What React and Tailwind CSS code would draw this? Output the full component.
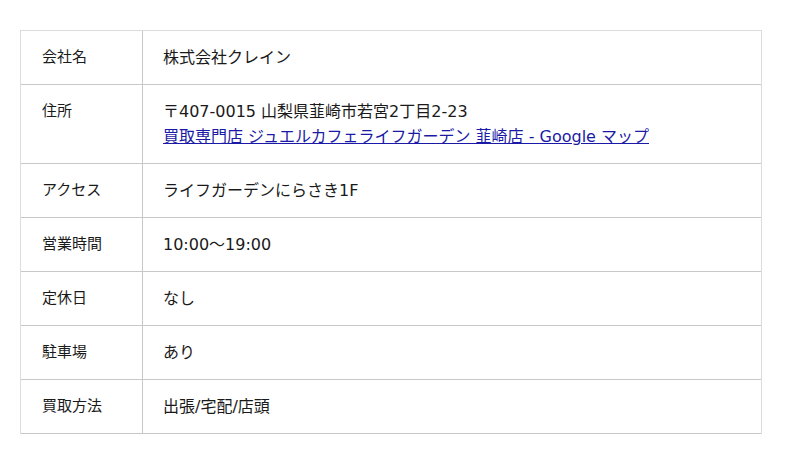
import React from 'react';

const rows = [
  { label: '会社名', value: '株式会社クレイン' },
  {
    label: '住所',
    value: '〒407-0015 山梨県韮崎市若宮2丁目2-23',
    link: '買取専門店 ジュエルカフェライフガーデン 韮崎店 - Google マップ',
  },
  { label: 'アクセス', value: 'ライフガーデンにらさき1F' },
  { label: '営業時間', value: '10:00〜19:00' },
  { label: '定休日', value: 'なし' },
  { label: '駐車場', value: 'あり' },
  { label: '買取方法', value: '出張/宅配/店頭' },
];

const App = () => {
  return (
    <div
      className="w-[800px] h-[464px] bg-white pt-[30px] px-[20px] text-[#1a1a1a]"
      style={{ fontFamily: '"DejaVu Sans", "Noto Sans CJK JP", sans-serif' }}
    >
      <div className="w-[742px] border-t border-x border-[#dcdcdc]">
        {rows.map((row) => (
          <div key={row.label} className="flex border-b border-[#c8c8c8]">
            <div className="w-[122px] shrink-0 border-r border-[#c8c8c8] px-[21px] py-[14px] text-[15px] leading-[25px]">
              {row.label}
            </div>
            <div className="flex-1 px-[20px] py-[14px] text-[16px] leading-[25px]">
              <div>{row.value}</div>
              {row.link && (
                <a href="#" className="text-[#1a1aa6] underline">
                  {row.link}
                </a>
              )}
            </div>
          </div>
        ))}
      </div>
    </div>
  );
};

export default App;
